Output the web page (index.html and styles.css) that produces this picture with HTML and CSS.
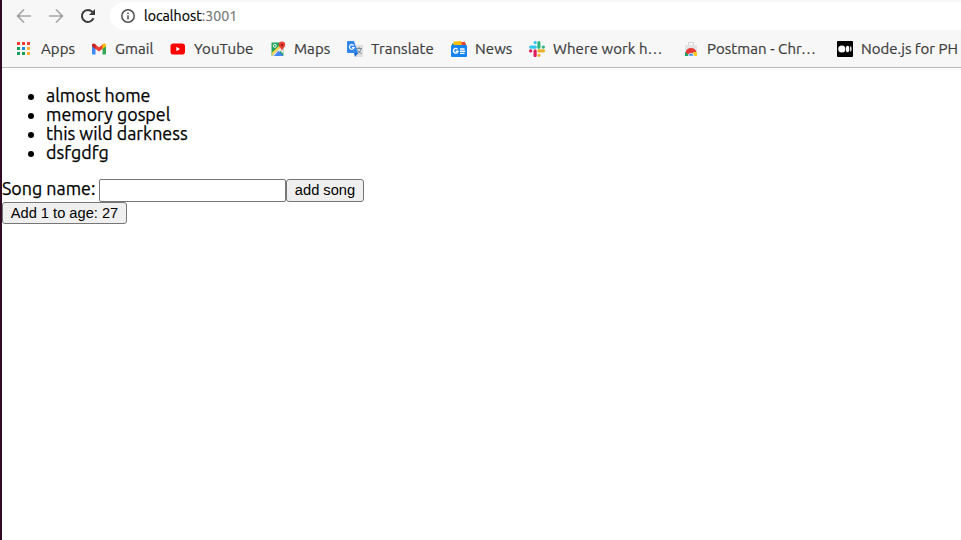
FILE: index.html
```html
<!DOCTYPE html>
<html lang="en">
<head>
<meta charset="utf-8">
<title>localhost:3001</title>
<link rel="stylesheet" href="styles.css">
</head>
<body>
<div class="window">
  <header class="chrome">
    <div class="toolbar">
      <svg class="nav off" viewBox="0 0 16 16"><path d="M15 8H2M8 1.500L1.500 8L8 14.500"/></svg>
      <svg class="nav off" viewBox="0 0 16 16"><path d="M1 8h13M8 1.500L14.500 8L8 14.500"/></svg>
      <svg class="nav" viewBox="0 0 16 16"><path d="M13.500 10.200A6 6 0 1 1 12.400 3.900L14 5.600"/><path class="solid" d="M15 1v6H9z"/></svg>
      <div class="address">
        <svg class="info" viewBox="0 0 14 14"><circle cx="7" cy="7" r="6.200"/><path d="M7 6.200v4.200M7 3.400v1.500"/></svg>
        <span class="url">localhost<span class="port">:3001</span></span>
      </div>
    </div>
    <nav class="bookmarks">
      <a class="mark"><svg viewBox="0 0 16 16"><path fill="#f33b36" d="M0 1h3v3H0zM5 1h3v3H5zM10 1h3v3h-3z"/><path fill="#17a05d" d="M0 6h3v3H0zM0 11h3v3H0zM5 11h3v3H5z"/><path fill="#1688f5" d="M5 6h3v3H5z"/><path fill="#ffad32" d="M10 6h3v3h-3zM10 11h3v3h-3z"/></svg><span>Apps</span></a>
      <a class="mark"><svg viewBox="0 0 16 16"><path fill="#4285f4" d="M1 4l3.500 2.300V13.500H2a1 1 0 0 1-1-1z"/><path fill="#34a853" d="M11.500 6.300L15 4v8.500a1 1 0 0 1-1 1h-2.500z"/><path fill="#ea4335" d="M4 3.200L8 6.300l4-3.100v4.300L8 10.600 4 7.500z"/><path fill="#c5221f" d="M1 4.400C1 2.300 3 2 4.500 3.300v4.600L1 5.300z"/><path fill="#fbbc04" d="M15 4.400c0-2.100-2-2.400-3.500-1.100v4.600l3.500-2.600z"/></svg><span>Gmail</span></a>
      <a class="mark"><svg viewBox="0 0 16 16"><rect x=".5" y="2.500" width="14.500" height="11" rx="2.800" fill="#f00"/><path fill="#fff" d="M6.300 5.800v4.400L10 8z"/></svg><span>YouTube</span></a>
      <a class="mark"><svg viewBox="0 0 16 16"><path fill="#1fa35b" d="M1.500 1.500h12V14.500h-12z"/><path fill="#e8e8e8" d="M2 14.500L13.500 3v10l-3-3-4 4.500z"/><path fill="#ffd04a" d="M1.500 12L11 3l2 1-11 10.500z"/><path fill="#4285f4" d="M4 15L8.500 9.800l5 5.200z"/><circle cx="4.800" cy="4.800" r="1.500" fill="none" stroke="#fff"/><path fill="#ea4335" d="M12 10c-.4-2.700-3.200-3.500-3.200-6.200a3.200 3.200 0 0 1 6.400 0c0 2.700-2.800 3.500-3.200 6.200z"/><circle cx="12" cy="4" r="1.200" fill="#961b19"/></svg><span>Maps</span></a>
      <a class="mark"><svg viewBox="0 0 16 16"><path fill="#dedede" d="M6 4h9a1 1 0 0 1 1 1v10a1 1 0 0 1-1 1H9z"/><path fill="none" stroke="#607988" stroke-width=".8" d="M9 7.500h6M12 6v1.500M10 8.500c1 2 2.500 3 4.500 4M14 8c-.7 2.500-2 4-4 5"/><path fill="#3286ea" d="M1 0h6l4 12H1a1 1 0 0 1-1-1V1a1 1 0 0 1 1-1z"/><path fill="#1967d2" d="M7 12h4l-3 4z"/><path fill="none" stroke="#fff" stroke-width="1.200" d="M6.700 4.700A2.300 2.300 0 1 0 7 6.500H5"/></svg><span>Translate</span></a>
      <a class="mark"><svg viewBox="0 0 16 16"><path fill="#149b59" d="M1 2.500h14v3H1z"/><path fill="#ea4335" d="M8 1.500l6-.8.8 4H8z"/><path fill="#fbbc04" d="M2.500.8L10 0l1 5H3z"/><rect y="4" width="16" height="12" rx="1" fill="#1684ee"/><path fill="none" stroke="#fff" stroke-width="1.400" d="M6.500 8.200A2.300 2.300 0 1 0 7 10.300H4.700M9 8h4.500M9 10.200h5.200M9 12.400h4.500"/></svg><span>News</span></a>
      <a class="mark"><svg viewBox="0 0 16 16" fill="none" stroke-width="3.200" stroke-linecap="round"><path stroke="#36c5f0" d="M1.700 6.100h4.600M6.100 1.600h.1"/><path stroke="#2eb67d" d="M9.900 1.700v4.600M14.300 6.100h.1"/><path stroke="#ecb22e" d="M9.900 9.900h4.600M9.900 14.300h.1"/><path stroke="#e01e5a" d="M6.100 9.900v4.600M1.600 9.900h.1"/></svg><span>Where work h…</span></a>
      <a class="mark"><svg viewBox="0 0 16 16"><path fill="#e4e4e4" d="M2 4h12v11H2z"/><path fill="none" stroke="#d2d2d2" d="M5.500 4V1.500h5V4"/><path fill="#e53935" d="M2.500 11.500a5.600 5.600 0 0 1 11 0L12 13H4z"/><path fill="#18a05d" d="M2 11l5 4H2z"/><path fill="#ffca28" d="M10 11h4v4H9z"/><path fill="#2787ee" stroke="#fff" stroke-width=".7" d="M5.300 15a2.700 2.700 0 0 1 5.400 0z"/></svg><span>Postman - Chr…</span></a>
      <a class="mark"><svg viewBox="0 0 16 16"><rect width="16" height="16" rx="1"/><g fill="#fff"><circle cx="4.800" cy="8" r="3.600"/><ellipse cx="10.600" cy="8" rx="1.700" ry="3.300"/><ellipse cx="13.800" cy="8" rx=".7" ry="2.900"/></g></svg><span class="last">Node.js for PH</span></a>
    </nav>
  </header>
  <main class="page">
    <ul class="songs">
      <li>almost home</li>
      <li>memory gospel</li>
      <li>this wild darkness</li>
      <li>dsfgdfg</li>
    </ul>
    <form class="song-form">
      <label for="song">Song name:</label>
      <input id="song" type="text">
      <button class="add" type="button">add song</button>
    </form>
    <button class="age" type="button">Add 1 to age: 27</button>
  </main>
</div>
</body>
</html>
```
FILE: styles.css
```css
* { box-sizing: border-box; }
body {
  margin: 0;
  background: #fff;
  color: #000;
  font-family: Ubuntu, "Noto Sans", sans-serif;
  overflow: hidden;
}
.window {
  height: 540px;
  border-left: 2px solid #300a24;
  overflow: hidden;
}
.chrome {
  height: 68px;
  background: #f7f7f7;
  border-bottom: 1px solid #bcbcbc;
}
.toolbar {
  display: flex;
  align-items: center;
  height: 32px;
  padding-left: 14px;
  gap: 16px;
}
.nav {
  flex: none;
  width: 16px;
  height: 16px;
  fill: none;
  stroke: #3c3c3c;
  stroke-width: 2;
}
.nav.off { stroke: #a5a5a5; stroke-width: 1.7; }
.nav .solid { fill: #3c3c3c; stroke: none; }
.address {
  display: flex;
  align-items: center;
  flex: 1;
  height: 28px;
  margin-left: -2px;
  padding-left: 11px;
  gap: 9px;
  background: #fff;
  border-radius: 14px 0 0 14px;
}
.info {
  width: 14px;
  height: 14px;
  fill: none;
  stroke: #505050;
  stroke-width: 1.5;
}
.url { font-size: 14.2px; line-height: 18px; -webkit-text-stroke: 0.2px; }
.port { color: #757575; }
.bookmarks {
  display: grid;
  grid-template-columns: 74px 79px 100px 77px 104px 78px 154px 154px 124px;
  height: 34px;
  padding-left: 15px;
}
.mark {
  display: flex;
  align-items: center;
  gap: 8px;
  color: #3c3c3c;
  font-size: 15px;
  line-height: 18px;
  letter-spacing: 0.07px;
  white-space: nowrap;
  -webkit-text-stroke: 0.2px;
}
.mark svg { flex: none; width: 16px; height: 16px; }
.mark .last { letter-spacing: 0; }
.page { font-size: 17.85px; }
.songs, .song-form label { -webkit-text-stroke: 0.25px; }
.songs {
  margin: 18px 0 17px;
  padding-left: 44px;
  line-height: 19px;
}
.song-form {
  display: flex;
  height: 23px;
}
.song-form label { width: 97px; line-height: 19px; white-space: nowrap; }
input {
  width: 187px;
  height: 23px;
  margin: 0;
  border: 1px solid #767676;
  border-radius: 2px;
  background: #fff;
}
button {
  display: block;
  margin: 0;
  padding: 0;
  border: 1px solid #767676;
  border-radius: 3px;
  background: #efefef;
  color: #000;
  font: 14.667px/20px "Liberation Sans", Arial, sans-serif;
  white-space: nowrap;
}
.add { width: 78px; height: 23px; padding-bottom: 1px; }
.age { width: 125px; height: 22px; }
```
